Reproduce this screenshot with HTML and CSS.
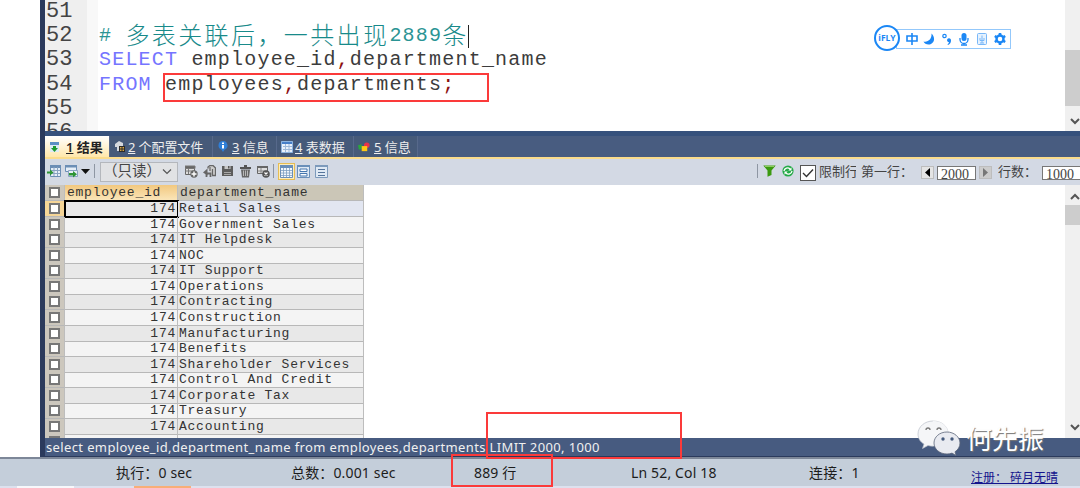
FILE: index.html
```
<!doctype html>
<html lang="zh-CN">

<head>
  <meta charset="utf-8">
  <title>SQL</title>
  <link rel="stylesheet" href="styles.css">
</head>

<body>
<div class="screen">
  <div class="main">
    <div class="panel">
      <div class="editor">
        <div class="gutter">51<br>52<br>53<br>54<br>55<br>56</div>
        <div class="fold"></div>
        <div class="code">
          <div class="line"></div>
          <div class="line comment"># <span class="cjk">多表关联后，一共出现</span>2889<span class="cjk">条</span><span class="caret"></span></div>
          <div class="line"><span class="kw">SELECT</span> employee_id<b>,</b>department_name</div>
          <div class="line"><span class="kw">FROM</span> employees<b>,</b>departments<b>;</b></div>
        </div>
        <div class="scroll">
          <div class="thumb thumb_code"></div>
          <svg class="arrow_dn" width="12" height="8" viewBox="0 0 12 8"><path d="M2 1l4 4 4-4" fill="none" stroke="#555" stroke-width="2"/></svg>
        </div>
      </div>

      <div class="tabs">
        <div class="tab tab_on">
          <svg width="12" height="12" viewBox="0 0 12 12"><path d="M1 1h9v10H1z" fill="#dfeaf5"/><path d="M1 1h9v3H1z" fill="#5d8fc4"/><path d="M4 5h3v2h2L5.500 11 2 7h2z" fill="#1d9a30"/></svg>
          <span><u>1</u> 结果</span>
        </div>
        <div class="tab tab_conf">
          <svg width="12" height="12" viewBox="0 0 12 12"><path d="M5 0L1 3v3h2v4h4V5h2V2z" fill="#d5d8dc"/><path d="M5 5h6v6H5z" fill="#2b2b2b"/><path d="M6 6h1.500v1.500H6zM8.500 6H10v1.500H8.500zM6 8.500h1.500V10H6zM8.500 8.500H10V10H8.500z" fill="#d9a640"/></svg>
          <span><u>2</u> 个配置文件</span>
        </div>
        <div class="tab tab_info">
          <svg width="12" height="12" viewBox="0 0 12 12"><path d="M1.500 4.500a4.500 4.500 0 1 1 6 4.200L6 11 4.500 8.700a4.500 4.500 0 0 1-3-4.200z" fill="#2f7fd8"/><path d="M5 1.500h2v1.500H5zM5 4h2v3.500H5z" fill="#fff"/></svg>
          <span><u>3</u> 信息</span>
        </div>
        <div class="tab tab_data">
          <svg width="12" height="12" viewBox="0 0 12 12"><path d="M.5.5h11v11H.5z" fill="#e9f1fa" stroke="#8db4df"/><path d="M1 1h10v2H1z" fill="#477fc8"/><path d="M2 5.500h9M2 8.500h9M4.500 3v8M8 3v8" stroke="#9eb9d9"/></svg>
          <span><u>4</u> 表数据</span>
        </div>
        <div class="tab tab_msg">
          <svg width="12" height="12" viewBox="0 0 13 12"><path d="M0 4l4-1v5l-3 1z" fill="#29a83c"/><circle cx="9.500" cy="4" r="3" fill="#e8334a"/><path d="M4 5h6v5.500H4z" fill="#ffc814"/></svg>
          <span><u>5</u> 信息</span>
        </div>
      </div>

      <div class="toolbar">
        <svg class="ico" width="14" height="14" viewBox="0 0 14 14"><path d="M3.500 1.500h10v11h-10z" fill="#e6eef7" stroke="#6c8eb5"/><path d="M3 1h11v3H3z" fill="#6c8eb5"/><path d="M4 6.500h9M4 9.500h9M7 3v9M10.500 3v9" stroke="#89a3c1"/><path d="M0 7.500h3V5.500L6.500 8.500 3 11.500V9.500H0z" fill="#2d9434"/></svg>
        <svg class="ico ico_2" width="14" height="14" viewBox="0 0 14 14"><path d="M.5 1.500h11v6H.5z" fill="#e6eef7" stroke="#6c8eb5"/><path d="M0 1h12v2.500H0z" fill="#6c8eb5"/><path d="M3.500 6.500h9v6h-9z" fill="#e6eef7" stroke="#89a3c1"/><path d="M4 9h4V7l4 3.200L8 13.500v-2H4z" fill="#2d9434"/></svg>
        <svg class="drop" width="9" height="5"><path d="M0 0h9L4.500 5z" fill="#111"/></svg>
        <i class="sep sep_1"></i>
        <div class="select"><span>（只读）</span><svg width="10" height="6" viewBox="0 0 10 6"><path d="M1 .5l4 4 4-4" fill="none" stroke="#555" stroke-width="1.200"/></svg></div>
        <div class="icons">
          <svg width="13" height="13" viewBox="0 0 13 13"><path d="M.5 1.500h9v8h-9z" fill="#ddd" stroke="#666"/><path d="M0 1h10v2.500H0zM0 6h9M3.500 3v6" fill="#666" stroke="#777"/><circle cx="9" cy="9" r="3.700" fill="#666"/><path d="M9 6.500v5M6.500 9h5" stroke="#fff" stroke-width="1.400"/></svg>
          <svg width="13" height="13" viewBox="0 0 13 13"><path d="M5 3.500V2l2-1.500h3L12.500 3v7.500H9" fill="#ccc" stroke="#666" stroke-width="1.300"/><path d="M9.500 4v6M7 2v4" stroke="#666" stroke-width="1.200"/><path d="M3.500 12V8.500h4V12" fill="none" stroke="#666" stroke-width="1.800"/><path d="M0 7.500L4.500 3.500v7z" fill="#666"/></svg>
          <svg width="13" height="13" viewBox="0 0 13 13"><path d="M1 1h11v10H1z" fill="#5c5c5c"/><path d="M3.500 1h6v3h-6z" fill="#c8c8c8"/><path d="M3 7.500h7M3 9.500h7" stroke="#a8a8a8"/><path d="M7 1h1.500v2.500H7z" fill="#555"/></svg>
          <svg width="13" height="13" viewBox="0 0 13 13"><path d="M5 0h3v2h4v2H1V2h4z" fill="#555"/><path d="M2 4.500h9l-1 8H3z" fill="#666"/><path d="M4.500 5.500v5.500M6.500 5.500v5.500M8.500 5.500v5.500" stroke="#ccc" stroke-width=".8"/></svg>
          <svg width="13" height="13" viewBox="0 0 13 13"><path d="M.5 1.500h10v7H.5z" fill="#ddd" stroke="#666"/><path d="M0 1h11v2H0z" fill="#666"/><path d="M1 6h9M4 3v5" stroke="#888"/><circle cx="9" cy="9" r="3.800" fill="#555"/><path d="M7.500 7.500l3 3M10.500 7.500l-3 3" stroke="#fff" stroke-width="1.200"/></svg>
        </div>
        <i class="sep sep_2"></i>
        <div class="view view_on"><svg width="13" height="13" viewBox="0 0 13 13"><path d="M.5.5h12v12H.5z" fill="#f3f8fc" stroke="#6a8fb9"/><path d="M0 0h13v3H0z" fill="#6a8fb9"/><path d="M1 5.500h11M1 8h11M1 10.500h11M3.500 3v9M6.500 3v9M9.500 3v9" stroke="#7e9fc2" stroke-width=".8"/></svg></div>
        <svg class="view_2" width="13" height="13" viewBox="0 0 13 13"><path d="M.5.5h12v12H.5z" fill="#dfe9f4" stroke="#6a8fb9"/><path d="M0 0h13v2H0z" fill="#6a8fb9"/><path d="M3 4h7v2.500H3zM3 8.500h7V11H3z" fill="#fff" stroke="#4676ae"/></svg>
        <svg class="view_3" width="13" height="13" viewBox="0 0 13 13"><path d="M.5.5h12v12H.5z" fill="#dfe9f4" stroke="#7d9abb"/><path d="M0 0h13v2H0z" fill="#7d9abb"/><path d="M3 4.500h7M3 7.500h7M3 10.500h7" stroke="#55749b"/></svg>

        <div class="limit">
          <i class="sep sep_3"></i>
          <svg class="funnel" width="13" height="12" viewBox="0 0 13 12"><path d="M.3.500h12.400L8.500 5.500V10l-4 1.800V5.500z" fill="#3b9a10"/><path d="M2 1.300h9" stroke="#a2d873"/></svg>
          <svg class="refresh" width="12" height="12" viewBox="0 0 12 12"><circle cx="6" cy="6" r="5.600" fill="#25aa48"/><path d="M2 6a3.500 3.500 0 0 1 6-2M10 6a3.500 3.500 0 0 1-6 2" fill="none" stroke="#fff" stroke-width="1.300"/><path d="M9.500 2.300v3.200H6.300zM2.500 9.700V6.500h3.200z" fill="#fff"/></svg>
          <div class="check"><svg width="14" height="14" viewBox="0 0 14 14"><path d="M2 7l3.500 3.500L12 3.500" fill="none" stroke="#333" stroke-width="1.400"/></svg></div>
          <span class="lbl lbl_cut">限制行</span>
          <span class="lbl lbl_first">第一行：</span>
          <div class="step"><svg width="5" height="9"><path d="M5 0v9L0 4.500z" fill="#000"/></svg></div>
          <div class="num">2000</div>
          <div class="step step_r"><svg width="5" height="9"><path d="M0 0v9l5-4.500z" fill="#777"/></svg></div>
          <span class="lbl lbl_rows">行数：</span>
          <div class="num num_r">1000</div>
        </div>
      </div>

      <div class="result">
        <div class="grid">
          <div class="row head"><div class="c0"><i></i></div><div class="c1">employee_id</div><div class="c2">department_name</div></div>
          <div class="row sel"><div class="c0"><i></i></div><div class="c1">174</div><div class="c2">Retail Sales</div></div>
          <div class="row"><div class="c0"><i></i></div><div class="c1">174</div><div class="c2">Government Sales</div></div>
          <div class="row"><div class="c0"><i></i></div><div class="c1">174</div><div class="c2">IT Helpdesk</div></div>
          <div class="row"><div class="c0"><i></i></div><div class="c1">174</div><div class="c2">NOC</div></div>
          <div class="row"><div class="c0"><i></i></div><div class="c1">174</div><div class="c2">IT Support</div></div>
          <div class="row"><div class="c0"><i></i></div><div class="c1">174</div><div class="c2">Operations</div></div>
          <div class="row"><div class="c0"><i></i></div><div class="c1">174</div><div class="c2">Contracting</div></div>
          <div class="row"><div class="c0"><i></i></div><div class="c1">174</div><div class="c2">Construction</div></div>
          <div class="row"><div class="c0"><i></i></div><div class="c1">174</div><div class="c2">Manufacturing</div></div>
          <div class="row"><div class="c0"><i></i></div><div class="c1">174</div><div class="c2">Benefits</div></div>
          <div class="row"><div class="c0"><i></i></div><div class="c1">174</div><div class="c2">Shareholder Services</div></div>
          <div class="row"><div class="c0"><i></i></div><div class="c1">174</div><div class="c2">Control And Credit</div></div>
          <div class="row"><div class="c0"><i></i></div><div class="c1">174</div><div class="c2">Corporate Tax</div></div>
          <div class="row"><div class="c0"><i></i></div><div class="c1">174</div><div class="c2">Treasury</div></div>
          <div class="row"><div class="c0"><i></i></div><div class="c1">174</div><div class="c2">Accounting</div></div>
          <div class="row"><div class="c0"><i></i></div><div class="c1"></div><div class="c2"></div></div>
        </div>
        <div class="scroll">
          <svg class="arrow_up" width="12" height="8" viewBox="0 0 12 8"><path d="M2 6l4-4 4 4" fill="none" stroke="#555" stroke-width="2"/></svg>
          <div class="thumb thumb_grid"></div>
          <svg class="arrow_dn" width="12" height="8" viewBox="0 0 12 8"><path d="M2 1l4 4 4-4" fill="none" stroke="#555" stroke-width="2"/></svg>
        </div>
      </div>

      <div class="query">select employee_id,department_name from employees,departments LIMIT 2000, 1000</div>
    </div>
  </div>

  <div class="status">
    <span>执行：0 sec</span>
    <span>总数：0.001 sec</span>
    <span>889 行</span>
    <span>Ln 52, Col 18</span>
    <span>连接：1</span>
    <a>注册： 碎月无晴</a>
  </div>
  <div class="taskbar"><i></i><i class="orange"></i></div>

  <!-- input method bar floating over the editor -->
  <div class="ime">
    <div class="ime_logo">iFLY</div>
    <div class="ime_bar">
      <svg width="12" height="14" viewBox="0 0 12 14"><path d="M1 4h10v5H1zM6 1v12" fill="none" stroke="#1b87f5" stroke-width="1.600"/></svg>
      <svg width="12" height="14" viewBox="0 0 12 14"><path d="M8.500 1.500C12 5 12 10 8 12c-3 1.300-6.500 0-7.500-2.500C5 10.500 9 7 8.500 1.500z" fill="#1b87f5"/></svg>
      <svg width="12" height="14" viewBox="0 0 12 14"><circle cx="3.500" cy="4" r="1.700" fill="none" stroke="#1b87f5" stroke-width="1.200"/><path d="M6 8a2 2 0 1 1 4 .5C10 10.500 9 12 7 13l-.5-.7c1-.7 1.500-1.400 1.400-2.200C6.800 10 6 9.200 6 8z" fill="#1b87f5"/></svg>
      <svg width="12" height="14" viewBox="0 0 12 14"><rect x="3.500" y="1" width="5" height="8" rx="2.500" fill="#1b87f5"/><path d="M2 6v1.500a4 4 0 0 0 8 0V6M6 11v2M3 13h6" fill="none" stroke="#1b87f5" stroke-width="1.300"/></svg>
      <svg width="12" height="14" viewBox="0 0 12 14"><rect x="1.500" y="1.500" width="9" height="11" rx="1" fill="#e6f2fe" stroke="#78b7f8"/><path d="M6 3.500v4.500M4 6v2.500h4V6M6 9v2M4 11h4" fill="none" stroke="#78b7f8"/></svg>
      <svg width="14" height="14" viewBox="0 0 14 14"><circle cx="7" cy="7" r="3.500" fill="none" stroke="#1b87f5" stroke-width="2.400"/><path d="M7 1v2.500M7 10.500V13M1.800 4l2.200 1.300M10 8.700l2.200 1.300M1.800 10L4 8.700M10 5.300L12.200 4" stroke="#1b87f5" stroke-width="2.600"/></svg>
    </div>
  </div>

  <div class="mark mark_from"></div>
  <div class="mark mark_limit"></div>
  <div class="mark mark_rows"></div>

  <div class="watermark">
    <svg width="44" height="37" viewBox="0 0 44 37">
      <path d="M16 1C8 1 1 6.500 1 14c0 4.500 2.500 8 6 10l-1.500 4.500 5.500-3c2 .6 4 .8 6.500.6" fill="#f5f6f8" stroke="#b9bfc9" stroke-width=".7"/>
      <path d="M16 1c8 0 14 4.500 15 11" fill="#f5f6f8" stroke="#c3c7cf" stroke-width=".7"/>
      <path d="M16 1c8 0 14 4.500 15 11L17 26 8 20z" fill="#f5f6f8"/>
      <path d="M30 12c-7.500 0-13 5-13 11s5.500 11 13 11c1.700 0 3.300-.3 5-.9l4 2.400-1-3.700c3-2 5-5 5-8.800 0-6-6-11-13-11z" fill="#e9ebf1" stroke="#5a6478" stroke-width=".8"/>
      <path d="M9 10a2 2 0 0 1 4 0M20 10a2 2 0 0 1 4 0" fill="none" stroke="#777" stroke-width="1.300"/>
      <circle cx="26" cy="19" r="1.700" fill="#455a7d"/><circle cx="35" cy="19" r="1.700" fill="#455a7d"/>
    </svg>
    <span>何先振</span>
  </div>
</div>
</body>

</html>
```
FILE: styles.css
```
* {
  box-sizing: border-box;
}

body {
  margin: 0;
  background: #fff;
  font-family: "Noto Sans", "Noto Sans CJK SC", sans-serif;
}

svg {
  display: block;
  flex: none;
}

.screen {
  position: relative;
  width: 1080px;
  height: 488px;
  overflow: hidden;
}

.main {
  height: 459px;
  padding-left: 40px;
  border-bottom: 2px solid #7d8798;
}

.panel {
  height: 457px;
  border-left: 5px solid #2b3a5c;
  display: flex;
  flex-direction: column;
}

/* editor */
.editor {
  height: 131px;
  display: flex;
  overflow: hidden;
  font: 20px/24.200px "Liberation Mono", monospace;
  letter-spacing: 1.200px;
}

.gutter {
  width: 42px;
  background: #efefef;
  color: #444;
  padding-left: 1px;
  font-size: 22px;
  letter-spacing: 0;
}

.fold {
  width: 11px;
  background: #f8f8f8;
}

.code {
  flex: 1;
  padding-left: 1px;
  color: #3c3c3c;
}

.line {
  height: 24.200px;
  white-space: pre;
  display: flex;
  align-items: center;
}

.line b {
  font-weight: normal;
  color: #8b1010;
}

.comment {
  color: #2a9494;
}

.cjk {
  font-family: "Noto Sans CJK SC", sans-serif;
  font-weight: 300;
  font-size: 24px;
  line-height: 20px;
  letter-spacing: 2.400px;
  color: #188a8a;
  margin-bottom: 4px;
}

.caret {
  width: 1px;
  height: 23px;
  margin-left: -1px;
  background: #222;
}

.kw {
  color: #7575ff;
}

.scroll {
  width: 15px;
  flex: none;
  background: #f0f0f0;
  display: flex;
  flex-direction: column;
  overflow: hidden;
}

.thumb {
  background: #cdcdcd;
}

.thumb_code {
  height: 56px;
  margin-top: 50px;
}

.thumb_grid {
  height: 20px;
  margin-top: 4px;
}

.arrow_dn {
  margin: auto 0 6px 4px;
}

.arrow_up {
  margin: 8px 0 0 4px;
}

.editor .arrow_dn {
  margin-bottom: 5px;
}

/* result tabs */
.tabs {
  height: 28px;
  display: flex;
  background: #485c80;
  border-top: 5px solid #36517c;
  border-bottom: 2px solid #fbdc8c;
  font-size: 13px;
  color: #eee;
}

.tab {
  display: flex;
  align-items: center;
  gap: 4px;
  padding-left: 4px;
  border-right: 1px solid #57698b;
  background: #465a79;
  white-space: nowrap;
}

.tab span {
  line-height: 20px;
}

.tab_on {
  width: 65px;
  gap: 5px;
  background: linear-gradient(#fff, #ffe7ab);
  color: #222;
  font-weight: 600;
}

.tab_conf {
  width: 103px;
  gap: 2px;
  letter-spacing: -.1px;
}

.tab_info {
  width: 64px;
  gap: 3px;
}

.tab_data {
  width: 77px;
  gap: 2px;
}

.tab_msg {
  width: 64px;
}

/* toolbar */
.toolbar {
  height: 26px;
  display: flex;
  align-items: center;
  padding: 0 0 2px 2px;
  background: #d3d9e4;
  color: #444;
  font-size: 13px;
}

.ico_2 {
  margin-left: 4px;
}

.drop {
  margin-left: 2px;
}

.sep {
  flex: none;
  width: 1px;
  height: 14px;
  background: #8e96a3;
}

.sep_1 {
  margin-left: 4px;
}

.select {
  width: 78px;
  height: 20px;
  margin-left: 5px;
  padding-right: 5px;
  border: 1px solid #b4b7bc;
  background: #e1e2e4;
  display: flex;
  align-items: center;
  justify-content: space-between;
  white-space: nowrap;
  font-size: 14.500px;
  line-height: 18px;
  margin-top: 1px;
}

.select span {
  margin: -3px 0 0 2px;
}

.icons {
  display: flex;
  gap: 5px;
  margin-left: 7px;
}

.sep_2 {
  margin-left: 3px;
}

.view {
  margin-left: 4px;
  padding: 1px;
  border: 1px solid #e6bd55;
  background: #fdeebb;
}

.view_2 {
  margin-left: 2px;
}

.view_3 {
  margin-left: 5px;
}

.limit {
  margin-left: auto;
  display: flex;
  align-items: center;
  width: 323px;
}

.funnel {
  margin-left: 5px;
}

.refresh {
  margin-left: 6px;
}

.check {
  flex: none;
  margin: 4px 0 0 6px;
  border: 1px solid #555;
  background: #fff;
}

.lbl {
  flex: none;
  overflow: hidden;
  white-space: nowrap;
  line-height: 20px;
}

.lbl_cut {
  width: 37px;
  margin-left: 3px;
}

.lbl_first {
  width: 52px;
  margin-left: 5px;
}

.lbl_rows {
  width: 39px;
  margin-left: 6px;
}

.step {
  flex: none;
  width: 13px;
  height: 13px;
  margin: 3px 0 0 8px;
  border: 1px solid #bdbdbd;
  background: #e4e4e4;
  display: flex;
  align-items: center;
  justify-content: center;
}

.step_r {
  margin-left: 3px;
  background: #ccc;
}

.num {
  flex: none;
  width: 39px;
  height: 14px;
  margin: 4px 0 0 3px;
  padding-left: 3px;
  border: 1px solid #777;
  background: #fff;
  overflow: hidden;
  font: 14px/15px "Liberation Serif", serif;
}

.num_r {
  margin-left: 5px;
}

/* result grid */
.result {
  height: 253px;
  display: flex;
  justify-content: space-between;
  overflow: hidden;
}

.grid {
  width: 319px;
  font: 13px/15px "Liberation Mono", monospace;
  letter-spacing: .75px;
  color: #333;
}

.row {
  display: grid;
  grid-template-columns: 20px 113px 186px;
  height: 15.570px;
  background: #f4f4f4;
}

.row:nth-child(even) {
  background: #e8e8e8;
}

.row div {
  border-right: 1px solid #bdbdbd;
  border-bottom: 1px solid #b8b8b8;
  white-space: pre;
}

.row .c0 {
  background: #ccc7bd;
  display: flex;
  align-items: center;
  justify-content: center;
}

.c0 i {
  width: 11px;
  height: 11px;
  border: 2px solid #777;
  background: #fff;
}

.c1 {
  text-align: right;
  padding-right: 1px;
}

.c2 {
  padding-left: 1px;
}

.head {
  height: 16px;
}

.head .c1 {
  text-align: left;
  padding-left: 2px;
  background: linear-gradient(#f2c87f, #fae5b8);
}

.head .c2 {
  padding-left: 2px;
  background: #cbc6b7;
}

.row.sel .c0 {
  background: #f5d597;
}

.row.sel .c1 {
  border: 1px solid #000;
  line-height: 14px;
  outline: .5px solid #000;
}

.sel .c2 {
  background: #e2e6f1;
}

.query {
  height: 19px;
  padding-left: 1px;
  background: #475b80;
  border-bottom: 1px solid #2b3a5c;
  color: #f0f0f0;
  font-size: 13px;
  line-height: 18px;
  letter-spacing: .37px;
  white-space: pre;
}

/* status bar */
.status {
  height: 27px;
  display: grid;
  grid-template-columns: 175px 183px 157px 178px 162px 109px;
  padding-left: 116px;
  background: #c4ceda;
  color: #1c1c1c;
  font-size: 14px;
  line-height: 28px;
  letter-spacing: .15px;
  white-space: pre;
}

.status a {
  font-size: 12px;
  line-height: 38px;
  height: 27px;
  letter-spacing: 0;
  color: #14148c;
  text-decoration: underline;
}

.taskbar {
  height: 2px;
  background: #dde1ee;
  display: flex;
}

.taskbar i {
  width: 57px;
  margin-left: 17px;
  background: #f7f8fb;
}

.taskbar .orange {
  margin-left: 60px;
  background: #f8ae78;
}

/* input method bar */
.ime {
  position: absolute;
  left: 874px;
  top: 25px;
  display: flex;
  align-items: center;
}

.ime_logo {
  width: 26px;
  height: 26px;
  border: 2px solid #1b87f5;
  border-radius: 50%;
  background: #fff;
  color: #1b87f5;
  font: bold 8.500px/22px "Open Sans", sans-serif;
  text-align: center;
  z-index: 1;
}

.ime_bar {
  width: 115px;
  height: 20px;
  margin: 1px 0 0 -4px;
  padding: 0 3px 0 9px;
  border: 1px solid #93c8fb;
  background: #fff;
  display: flex;
  align-items: center;
  justify-content: space-between;
}

/* red annotation boxes */
.mark {
  position: absolute;
  border: 2px solid #fb3a3a;
}

.mark_from {
  left: 163px;
  top: 73px;
  width: 326px;
  height: 29px;
}

.mark_limit {
  left: 486px;
  top: 412px;
  width: 196px;
  height: 47px;
}

.mark_rows {
  left: 451px;
  top: 454px;
  width: 102px;
  height: 33px;
}

.watermark {
  position: absolute;
  left: 917px;
  top: 420px;
  display: flex;
  gap: 5px;
  color: #fff;
  font-size: 26px;
  line-height: 38px;
  text-shadow: 1px 1px 1px #777;
}
```
